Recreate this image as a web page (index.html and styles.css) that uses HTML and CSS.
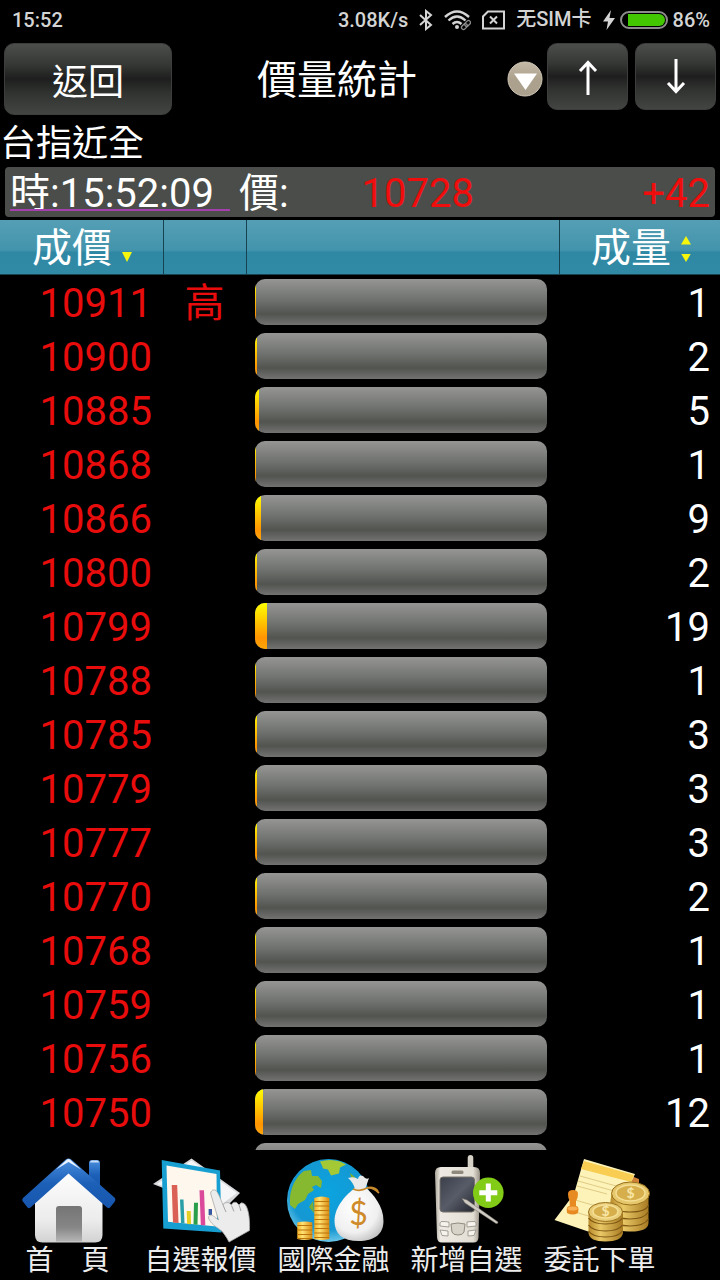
FILE: index.html
```html
<!DOCTYPE html>
<html lang="zh-Hant">
<head>
<meta charset="utf-8">
<meta name="viewport" content="width=device-width, initial-scale=1">
<title>價量統計</title>
<link rel="stylesheet" href="styles.css">
</head>
<body>
<div class="status">
  <span class="clock">15:52</span>
  <span>3.08K/s</span>
  <svg class="st-icon" width="14" height="22" viewBox="0 0 14 22" fill="none" stroke="#d4d4d4" stroke-width="2"><path d="M1 6l11 10-5 4V2l5 4L1 16"/></svg>
  <svg class="st-icon" width="27" height="22" viewBox="0 0 27 22" fill="none" stroke="#d4d4d4" stroke-width="2.4"><path d="M1 8Q13 -3 25 8M4.500 11.500Q13 3.500 21.500 11.500M8.500 15Q13 11 17.500 15"/><circle cx="13" cy="18" r="2" fill="#d4d4d4" stroke="none"/><g transform="rotate(-45 22 16)" stroke="#8c8c8c" stroke-width="1.300"><rect x="16.500" y="14" width="6.500" height="4" rx="2"/><rect x="21" y="14" width="6.500" height="4" rx="2"/></g></svg>
  <svg class="st-icon" width="23" height="20" viewBox="0 0 23 20" fill="none" stroke="#d4d4d4" stroke-width="2"><path d="M6 1.500H22V18.500H1V6.500zM8 6.500l7 7M15 6.500l-7 7"/></svg>
  <span class="sim">无SIM卡</span>
  <span class="power">
    <svg width="12" height="20" viewBox="0 0 12 20"><path d="M8 0L0 11.500H5L3.500 20 12 8H6.500z" fill="#d4d4d4"/></svg>
    <svg width="48" height="18" viewBox="0 0 48 18"><rect x="1" y="1" width="46" height="16" rx="8" fill="#000" stroke="#8c8c8c" stroke-width="2"/><path d="M8 3H39a6 6 0 0 1 0 12H8z" fill="#43c700"/></svg>
    <span>86%</span>
  </span>
</div>

<header class="bar">
  <button class="btn back" type="button">返回</button>
  <h1 class="title">價量統計</h1>
  <button class="drop" type="button" aria-label="選單">
    <svg width="36" height="36" viewBox="0 0 36 36"><defs><linearGradient id="tan" x1="0" y1="0" x2="0" y2="1"><stop offset="0" stop-color="#c3b9a6"/><stop offset=".5" stop-color="#aca18d"/><stop offset="1" stop-color="#aaa08d"/></linearGradient></defs><circle cx="18" cy="18" r="17" fill="url(#tan)" stroke="#d0c7b7"/><path d="M7 12.500H30L18.500 29z" fill="#fff"/></svg>
  </button>
  <div class="arrows">
    <button class="btn step" type="button" aria-label="上一個"><svg width="20" height="36" viewBox="0 0 20 36" fill="none" stroke="#fff" stroke-width="3"><path d="M10 36V3M2 12L10 3.500 18 12"/></svg></button>
    <button class="btn step" type="button" aria-label="下一個"><svg width="20" height="36" viewBox="0 0 20 36" fill="none" stroke="#fff" stroke-width="3"><path d="M10 0V33M2 24L10 32.500 18 24"/></svg></button>
  </div>
</header>

<h2 class="name">台指近全</h2>
<div class="quote">
  <span class="time">時:15:52:09</span>
  <span class="price"><span>價:</span><span class="up">10728</span></span>
  <span class="change up">+42</span>
</div>

<main class="list">
<table class="grid">
  <colgroup><col class="c-price"><col class="c-mark"><col><col class="c-vol"></colgroup>
  <thead>
    <tr>
      <th scope="col"><button class="sort" type="button">成價<span class="tri"><i class="dn"></i></span></button></th>
      <th scope="col"></th>
      <th scope="col"></th>
      <th scope="col"><button class="sort" type="button">成量<span class="tri"><i class="upw"></i><i class="dn"></i></span></button></th>
    </tr>
  </thead>
  <tbody>
    <tr><td>10911</td><td>高</td><td><div class="track"><div class="fill" style="width:0.3%"></div></div></td><td>1</td></tr>
    <tr><td>10900</td><td></td><td><div class="track"><div class="fill" style="width:0.6%"></div></div></td><td>2</td></tr>
    <tr><td>10885</td><td></td><td><div class="track"><div class="fill" style="width:1.3%"></div></div></td><td>5</td></tr>
    <tr><td>10868</td><td></td><td><div class="track"><div class="fill" style="width:0.3%"></div></div></td><td>1</td></tr>
    <tr><td>10866</td><td></td><td><div class="track"><div class="fill" style="width:2.1%"></div></div></td><td>9</td></tr>
    <tr><td>10800</td><td></td><td><div class="track"><div class="fill" style="width:0.6%"></div></div></td><td>2</td></tr>
    <tr><td>10799</td><td></td><td><div class="track"><div class="fill" style="width:4.1%"></div></div></td><td>19</td></tr>
    <tr><td>10788</td><td></td><td><div class="track"><div class="fill" style="width:0.3%"></div></div></td><td>1</td></tr>
    <tr><td>10785</td><td></td><td><div class="track"><div class="fill" style="width:0.8%"></div></div></td><td>3</td></tr>
    <tr><td>10779</td><td></td><td><div class="track"><div class="fill" style="width:0.8%"></div></div></td><td>3</td></tr>
    <tr><td>10777</td><td></td><td><div class="track"><div class="fill" style="width:0.8%"></div></div></td><td>3</td></tr>
    <tr><td>10770</td><td></td><td><div class="track"><div class="fill" style="width:0.6%"></div></div></td><td>2</td></tr>
    <tr><td>10768</td><td></td><td><div class="track"><div class="fill" style="width:0.3%"></div></div></td><td>1</td></tr>
    <tr><td>10759</td><td></td><td><div class="track"><div class="fill" style="width:0.3%"></div></div></td><td>1</td></tr>
    <tr><td>10756</td><td></td><td><div class="track"><div class="fill" style="width:0.3%"></div></div></td><td>1</td></tr>
    <tr><td>10750</td><td></td><td><div class="track"><div class="fill" style="width:2.6%"></div></div></td><td>12</td></tr>
    <tr><td></td><td></td><td><div class="track"></div></td><td></td></tr>
  </tbody>
</table>
</main>

<nav class="nav">
  <a class="item" href="#home">
    <svg viewBox="0 0 133 96">
      <defs>
        <linearGradient id="roof" x1="0" y1="0" x2="0" y2="1"><stop offset="0" stop-color="#4b8fe0"/><stop offset=".5" stop-color="#1c60b8"/><stop offset="1" stop-color="#1755ad"/></linearGradient>
        <linearGradient id="wall" x1="0" y1="0" x2="0" y2="1"><stop offset="0" stop-color="#fff"/><stop offset=".7" stop-color="#ececec"/><stop offset="1" stop-color="#d2d2d2"/></linearGradient>
        <linearGradient id="door" x1="0" y1="0" x2="0" y2="1"><stop offset="0" stop-color="#757575"/><stop offset=".6" stop-color="#868686"/><stop offset="1" stop-color="#b5b5b5"/></linearGradient>
      </defs>
      <path d="M88 13q0-3 3-3h5q3 0 3 3V40L88 30z" fill="url(#roof)"/><path d="M89 12.500q0-2 2-2h5q2 0 2 2z" fill="#c9def5"/>
      <path d="M67.500 18L101.500 49V85q0 7.500-7.500 7.500H41.500q-7.500 0-7.500-7.500V49z" fill="url(#wall)"/>
      <path d="M55 91.500V59q0-3 3-3H78q3 0 3 3V91.500z" fill="url(#door)"/>
      <path d="M67.500 8.500q1.500 0 3 1.300L114 48q1 2-.5 4L109 57.500q-1.500 1.500-3 0L67.500 23.500 29.500 57.500q-2 1.500-3 0L21.500 51q-.8-1.500.5-3L64.500 9.800q1.500-1.300 3-1.300z" fill="url(#roof)"/>
      <path d="M55 19.500L66 9.500q1.500-1 3 0L80 19.500 67.500 12z" fill="#eaf3ff"/>
    </svg>
    <span>首　頁</span>
  </a>
  <a class="item" href="#quotes">
    <svg viewBox="0 0 133 96">
      <path d="M57.500 8.500L106 43 88 61 19 34z" fill="#d7d9db"/><path d="M57.500 10.500L103 43 88 54 23 34z" fill="#f4f6f8"/>
      <path d="M27.700 10L86 20.500 87.500 82.500 29.300 78.500z" fill="#179fd2"/>
      <path d="M32.500 15.500L82.500 24 83 76.500 34 71.800z" fill="#fdf7ed"/>
      <path d="M37.700 35h5.500l1.300 38-5.500-.5z" fill="#da5f55"/><path d="M46 49.500h3.500l1 24-3.500-.4z" fill="#2a9fa8"/><path d="M52.700 61h4l.4 13.300-4-.4z" fill="#e5cf25"/><path d="M60 52.700h4l-.5 22.100-4-.4z" fill="#2b9e4b"/><path d="M65.500 40.200h4.500l1.300 35.300-4.500-.4z" fill="#db4a9a"/><path d="M74.600 59h3.400v6h-3.400z" fill="#3657a4"/>
      <path d="M76.500 43q1.500-4.500 5.500-2.500 2.500 2.500 7 14.500 1-3 5-2.500 2 .5 3.500 2.500 1-3.500 5-2.500l2.500 2.500q2-3.500 5-1.500c4 3 6 13 5.500 27L95 92c-2-4-5-9-8.500-12C81 76 77 74 74.500 68c-.5-2 3-5 6-1l4 3z" fill="#ececec" stroke="#a9a9a9" stroke-width=".8"/>
      <path d="M89 55l3 7M97.500 55.500l2.500 6M105 55l2 6" fill="none" stroke="#a4a4a4" stroke-width="1"/>
    </svg>
    <span>自選報價</span>
  </a>
  <a class="item" href="#global">
    <svg viewBox="0 0 133 96">
      <defs>
        <radialGradient id="sea" cx=".5" cy=".4" r=".6"><stop offset="0" stop-color="#0ba4e0"/><stop offset=".75" stop-color="#1597d2"/><stop offset="1" stop-color="#6ac6e8"/></radialGradient>
        <linearGradient id="coin" x1="0" y1="0" x2="1" y2="0"><stop offset="0" stop-color="#f3b127"/><stop offset=".35" stop-color="#ffe274"/><stop offset="1" stop-color="#d98a10"/></linearGradient>
        <radialGradient id="bag" cx=".4" cy=".35" r=".7"><stop offset="0" stop-color="#fff"/><stop offset=".7" stop-color="#f0f0f0"/><stop offset="1" stop-color="#c5c5c5"/></radialGradient>
      </defs>
      <circle cx="61.500" cy="50.500" r="41.500" fill="url(#sea)"/>
      <path d="M27 33q5-9 10-12l7-1 1 6 6 0 4 5-1 7-5-3-4 2 2 3-6 4-3 6-7 4-3 5-5-4q-1-12 4-22z" fill="#86b92f"/>
      <path d="M53 11.500q10-3 20 0l6 3-6 3-1 6-8 2-3-6-5-1-1-3z" fill="#a5c935"/><path d="M46 51l-4 6 5 6zM83 23q8 6 12 13l-9-2z" fill="#79ae32"/>
      <path d="M47.300 48q7.500-3 15 0V89q-7.500 2-15 0z" fill="url(#coin)"/><path d="M47.300 51.500h15m-15 4.500h15m-15 4.500h15m-15 4.500h15m-15 4.500h15m-15 4.500h15m-15 4.500h15m-15 4.500h15m-15 4.500h15" stroke="#bd7408" stroke-width="1"/>
      <path d="M30.300 72.500q7.500-2 15 0V89q-7.500 2-15 0z" fill="url(#coin)"/><path d="M30.300 75.500h15m-15 4.500h15m-15 4.500h15m-15 4h15" stroke="#bd7408" stroke-width="1"/>
      <path d="M88 38C80 44 67.500 56 67.500 71c0 13 8 20 24 20s25-7 25-20C116.500 56 106 44 99 38z" fill="url(#bag)"/>
      <path d="M88 39q-2-7-7-11 6-2 10 1 1-5 5-3 3 4 6 2-2 6-4 11z" fill="#e9e9e9"/>
      <path d="M86 39q7 3 14-1 6-1 12 5M99 38q8-2 12 3" fill="none" stroke="#c68a2c" stroke-width="1.800"/>
      <text class="dollar" x="91.500" y="75" text-anchor="middle">$</text>
    </svg>
    <span>國際金融</span>
  </a>
  <a class="item" href="#add">
    <svg viewBox="0 0 133 96">
      <defs>
        <linearGradient id="body" x1="0" y1="0" x2="1" y2="0"><stop offset="0" stop-color="#aaa498"/><stop offset=".12" stop-color="#eeeae3"/><stop offset=".85" stop-color="#e3ded4"/><stop offset="1" stop-color="#999287"/></linearGradient>
        <linearGradient id="lcd" x1="0" y1="0" x2="1" y2="1"><stop offset="0" stop-color="#3b3f4a"/><stop offset=".5" stop-color="#585c68"/><stop offset="1" stop-color="#23262e"/></linearGradient>
      </defs>
      <path d="M67.700 24V8q0-3 2.800-3t2.800 3V24z" fill="#d6d1c7"/>
      <path d="M35 23q0-6 6-6H74q6 0 6 6L78.500 87q0 5.500-5 5.500H42q-5 0-5-5.500z" fill="url(#body)"/>
      <rect x="51.500" y="20.500" width="12" height="3.500" rx="1.500" fill="#8f897d"/>
      <rect x="40" y="27" width="34.500" height="35" rx="3" fill="url(#lcd)" stroke="#77736b"/>
      <path d="M40 73q0-2 4-1.500l5 .5v5l-9-1zM76 73q0-2-4-1.500l-5 .5v5l9-1zM40 80l8 1v5l-6-.5zM76 80l-8 1v5l6-.5z" fill="#f6f3ed" stroke="#918b80" stroke-width=".8"/>
      <path d="M51 74q7-2 14 0l-1 8q-1 3-6 3t-6-3z" fill="#d8d3c9" stroke="#918b80"/>
      <circle cx="88.300" cy="42.700" r="15.300" fill="#82cb16"/><path d="M88.300 33.500v18M79.300 42.700h18" stroke="#fff" stroke-width="5"/>
      <path d="M62 48.500l5 1.500L98 72q0 2-2 1.500L65 53z" fill="#d0cbc2" stroke="#77736b" stroke-width=".5"/>
    </svg>
    <span>新增自選</span>
  </a>
  <a class="item" href="#order">
    <svg viewBox="0 0 133 96">
      <defs><linearGradient id="gold" x1="0" y1="0" x2="1" y2="0"><stop offset="0" stop-color="#b88a2c"/><stop offset=".35" stop-color="#e9c866"/><stop offset="1" stop-color="#a77a22"/></linearGradient></defs>
      <path d="M98 26l8 3v8l-12-4z" fill="#cf8138"/>
      <path d="M51 9L102 24 88 54 58 82.500 21.500 70 41 44z" fill="#fdf3b8"/><path d="M51 11L101 25 98 32 48 19z" fill="#f8cd52"/>
      <path d="M47 26l47 13M45 31l36 10M44 36l30 8M42 50l28 8M35 60l24 7" stroke="#dfcb86" stroke-width="1"/>
      <path d="M35 44q0-4 5-4t5 4q0 4-2 7v5q2 0 2.500 3l-.5 4q-5 3-11 0l-.3-4q.5-3 3-3v-5q-1.700-3-1.700-7z" fill="#e88a22"/><ellipse cx="39.500" cy="58.500" rx="5" ry="2" fill="#f8b057"/>
      <path d="M77 55V73q0 8 19 8.500T115.500 73V43H78.500z" fill="url(#gold)"/><path d="M77 55q4 7 20 7t18.500-7M77 62q6 7 20 7t18.500-7M77 69q6 7 20 7t18.500-7" fill="none" stroke="#7d5713" stroke-width="1.200"/>
      <ellipse cx="97.500" cy="43.500" rx="19" ry="11.500" fill="#e6c76c" stroke="#98701d"/><ellipse cx="97.500" cy="43" rx="14.500" ry="8" fill="#d6af4c" stroke="#f4df95" stroke-width="1.500"/><text class="mint" x="97.500" y="48" text-anchor="middle">$</text>
      <path d="M55.500 62V83q1 8.500 17 8.500T90 83V62z" fill="url(#gold)"/><path d="M55.500 68q4 6 17 6t17-6M55.500 75q4 6 17 6t17-6M55.500 81q4 6 17 6t17-6" fill="none" stroke="#7d5713" stroke-width="1.200"/>
      <ellipse cx="72.500" cy="62" rx="17" ry="9.500" fill="#e9cd78" stroke="#98701d"/><ellipse cx="72.500" cy="61.500" rx="12.500" ry="6.500" fill="#d6af4c" stroke="#f4df95" stroke-width="1.500"/><text class="mint" x="72.500" y="66" text-anchor="middle">$</text>
    </svg>
    <span>委託下單</span>
  </a>
</nav>
</body>
</html>
```

FILE: styles.css
```css
* { box-sizing: border-box; }

body {
  margin: 0;
  height: 100vh;
  display: flex;
  flex-direction: column;
  background: #000;
  color: #fff;
  font-family: Roboto, "Noto Sans CJK TC", sans-serif;
  font-size: 40px;
}

button {
  padding: 0;
  border: 0;
  background: none;
  color: inherit;
  font: inherit;
}

svg { display: block; }

/* system status line */
.status {
  flex: none;
  display: flex;
  align-items: center;
  gap: 11px;
  height: 40px;
  padding: 0 10px 0 12px;
  color: #d4d4d4;
  font-size: 20px;
  font-weight: 500;
  line-height: 24px;
}
.clock { flex: 1; }
.sim {
  padding-bottom: 2px;
  font-family: Roboto, "Noto Sans CJK SC", sans-serif;
}
.power { display: flex; align-items: center; gap: 5px; }

/* title bar */
.bar {
  flex: none;
  display: flex;
  align-items: center;
  height: 76px;
  padding: 3px 4px 1px;
}
.btn {
  display: flex;
  align-items: center;
  justify-content: center;
  border: 1px solid #3c3e3c;
  border-radius: 10px;
  background: linear-gradient(#4c4e4c, #353735 30%, #1d1e1d 50%, #313331 70%, #434543);
}
.back {
  width: 168px;
  height: 72px;
  font-size: 36px;
}
.title {
  flex: 1;
  margin: 0;
  padding: 4px 5px 0 0;
  font-size: 40px;
  font-weight: 400;
  line-height: 48px;
  text-align: center;
}
.drop { margin-right: 4px; }
.arrows { display: flex; gap: 7px; align-self: flex-start; }
.step { width: 81px; height: 67px; }

/* instrument and last quote */
.name {
  flex: none;
  margin: 0;
  padding-top: 6px;
  font-size: 36px;
  font-weight: 400;
  line-height: 45px;
}
.quote {
  flex: none;
  display: grid;
  grid-template-columns: 220fr 244fr 236fr;
  margin: 0 5px 3px;
  padding: 4px 5px 0;
  border-radius: 4px;
  background: #4a4d49;
  line-height: 46px;
}
.time { position: relative; }
.time::after {
  content: "";
  position: absolute;
  left: 0;
  right: 0;
  bottom: 6px;
  height: 2px;
  background: #a63fae;
}
.price { display: flex; justify-content: space-between; padding-left: 9px; }
.change { text-align: right; }
.up { color: #f00d0d; }

/* price and volume table */
.list {
  flex: 1;
  min-height: 0;
  overflow-y: auto;
  scrollbar-width: none;
}
.grid {
  width: 100%;
  border-collapse: separate;
  border-spacing: 0;
  table-layout: fixed;
}
.c-price { width: 164px; }
.c-mark { width: 83px; }
.c-vol { width: 160px; }
th {
  height: 55px;
  padding: 0 29px 0 0;
  border-right: 1px solid #17424f;
  border-bottom: 1px solid #17424f;
  background: linear-gradient(#559fb5, #4294ac 56%, #2f88a3 60%, #328ba6);
  font-weight: 400;
  text-align: right;
}
th:first-child { padding-right: 31px; }
th:last-child { border-right: 0; }
.sort {
  display: inline-flex;
  align-items: center;
  gap: 10px;
  padding-top: 4px;
  line-height: 50px;
}
.tri {
  display: flex;
  flex-direction: column;
  justify-content: flex-end;
  gap: 9px;
  height: 26px;
}
.tri i {
  width: 10px;
  height: 10px;
  background: #f6f60c;
}
.upw { clip-path: polygon(50% 0, 100% 100%, 0 100%); }
.dn { clip-path: polygon(0 0, 100% 0, 50% 100%); }
td {
  height: 54px;
  padding: 4px 10px 0 0;
  line-height: 50px;
  text-align: right;
}
td:nth-child(1),
td:nth-child(2) { color: #e80c0c; }
td:nth-child(1) { padding-right: 12px; }
td:nth-child(2) { padding-right: 2px; text-align: center; }
td:nth-child(3) { padding: 0 13px 0 8px; }
.track {
  height: 46px;
  overflow: hidden;
  border-radius: 10px;
  background: linear-gradient(#959694, #70726f 45%, #525450 76%, #727371);
}
.fill {
  height: 100%;
  background: linear-gradient(#ff0, #ff9400 76%, #ffa60a);
}

/* bottom navigation */
.nav {
  flex: none;
  display: grid;
  grid-template-columns: repeat(5, 1fr);
  padding: 0 54px 4px 1px;
}
.item {
  display: flex;
  flex-direction: column;
  align-items: center;
  color: #ececec;
  font-size: 28px;
  line-height: 30px;
  text-decoration: none;
  white-space: nowrap;
}
.item svg { width: 100%; }
.dollar { fill: #cf8b2a; font: 32px Lato, sans-serif; }
.mint { fill: #f7e6a6; font: bold 14px Lato, sans-serif; }
```
